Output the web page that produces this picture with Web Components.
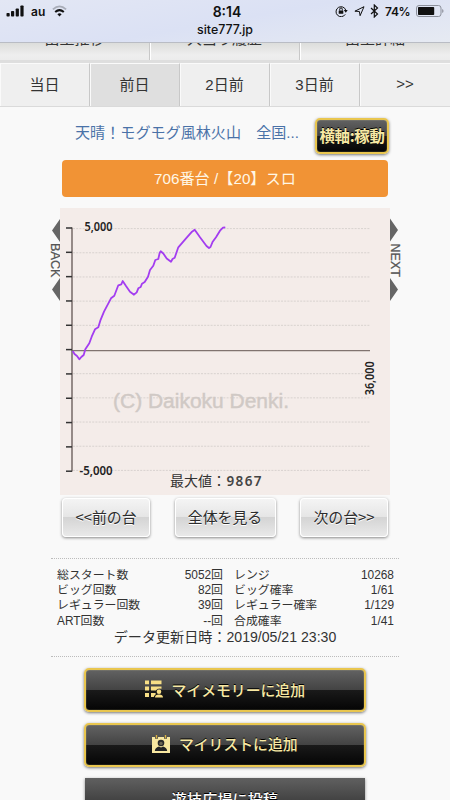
<!DOCTYPE html>
<html lang="ja">
<head>
<meta charset="utf-8">
<meta name="viewport" content="width=device-width">
<title>site777.jp</title>
<style>
html,body{margin:0;height:800px;overflow:hidden;background:#f9f9f9}
body{font-family:"Liberation Sans","Noto Sans CJK JP",sans-serif;color:#333}
</style>
</head>
<body>
<machine-page></machine-page>
<script>
function define(name, html) {
  const t = document.createElement('template');
  t.innerHTML = html;
  customElements.define(name, class extends HTMLElement {
    constructor() {
      super();
      this.attachShadow({mode: 'open'}).append(t.content.cloneNode(true));
    }
  });
}

define('status-bar', `<style>
:host{display:block;height:43px;box-sizing:border-box;background:linear-gradient(170deg,#e3e7f4,#dbe1f4 50%,#e6eaf2);border-bottom:1px solid #b9bcc4;color:#111;font-family:Inter,"Liberation Sans",sans-serif}
.row{display:grid;grid-template-columns:1fr 60px 1fr;height:22px;align-items:center}
.l,.r{display:flex;align-items:center}
.l{padding-left:6px;gap:7px;font-size:12px;font-weight:600}
.t{text-align:center;font-size:14px;font-weight:600;padding-left:4px}
.r{justify-content:flex-end;padding-right:6px;font-size:12px;font-weight:600}
.u{text-align:center;font-size:12.4px;line-height:15px;font-weight:500}
svg{display:block}
</style>
<div class="row">
<div class="l"><svg width="18" height="12" viewBox="0 0 18 12"><g fill="#111"><rect x="0.5" y="8" width="3.2" height="3.5" rx=".8"/><rect x="5" y="6" width="3.2" height="5.5" rx=".8"/><rect x="9.7" y="3.5" width="3.2" height="8" rx=".8"/><rect x="14.4" y=".5" width="3.2" height="11" rx=".8"/></g></svg><span>au</span>
<svg width="15" height="12" viewBox="0 0 15 12" fill="none" stroke-width="1.8"><path d="M.9 4.4Q7.500-1.700 14.100 4.400" stroke="#a9adb8"/><path d="M3.200 7Q7.500 3.200 11.800 7" stroke="#111" stroke-width="2"/><path d="M5.400 9.200Q7.500 7.500 9.600 9.200L7.500 11.400Z" fill="#111"/></svg></div>
<div class="t">8:14</div>
<div class="r"><svg width="13" height="12" viewBox="0 0 13 12" fill="none" stroke="#111"><path d="M10.300 9.300A5 5 0 1 1 10.800 5.200"/><path d="M8.800 5h3.900l-1.900 2.800Z" fill="#111" stroke="none"/><rect x="3.700" y="5.400" width="4.600" height="3.400" rx=".4" fill="#111" stroke="none"/><path d="M4.700 5.500V4.200a1.300 1.300 0 0 1 2.600 0v1.300"/></svg>
<svg style="margin-left:6px" width="11" height="12" viewBox="0 0 11 12"><path d="M.9 6.200L10 1.700 6.100 10.700 5.400 6.500Z" fill="none" stroke="#111" stroke-linejoin="round"/></svg>
<svg style="margin-left:5px" width="9" height="14" viewBox="0 0 9 14"><path d="M1 4l6.500 6L4.300 13V1l3.200 3L1 10" fill="none" stroke="#111" stroke-width="1.200"/></svg>
<span style="margin:0 4px 0 6px;width:27px;letter-spacing:-.3px">74%</span>
<svg width="28" height="12" viewBox="0 0 28 12"><rect x=".5" y=".5" width="24.500" height="11" rx="2.500" fill="none" stroke="#8c909b"/><rect x="2" y="2" width="16.200" height="8" rx=".8" fill="#111"/><path d="M26.200 4v4q1.300-.6 1.300-2t-1.300-2" fill="#8c909b"/></svg></div>
</div>
<div class="u">site777.jp</div>`);

define('upper-tabs', `<style>
:host{display:grid;grid-template-columns:150px 150px 150px;height:17px;overflow:hidden;background:linear-gradient(#dcdddb,#eee 12px,#ececec);border-bottom:3px solid #dedede}
::slotted(span){display:block;height:15px;line-height:15px;margin-top:-12px;padding-bottom:15px;text-align:center;font-size:15px;box-sizing:content-box;border-right:1px solid #c8c8c8;box-shadow:1px 0 #fff}
</style><slot></slot>`);

define('day-tabs', `<style>
:host{display:grid;grid-template-columns:repeat(5,1fr);height:43px;background:#efefef;border-bottom:1px solid #dadada}
</style><slot></slot>`);
define('day-tab', `<style>
:host{display:flex;align-items:center;justify-content:center;font-size:15px;border-right:1px solid #c8c8c8;border-left:1px solid #fafafa;border-top:1px solid #fafafa;color:#333;padding:0 1px 3px 0}
:host([selected]){background:#dfdfdf}
:host(:last-child){border-right:0}
</style><slot></slot>`);

define('gold-button', `<style>
:host{display:flex;box-sizing:border-box;border:2px solid #e9c64f;border-radius:5px;background:linear-gradient(#626262,#434343 50%,#1a1a1a 50%,#050505);box-shadow:0 1px 3px #777,inset 0 0 1px #fff3b0;color:#f8e9a4;align-items:center;justify-content:center;white-space:nowrap;text-shadow:0 -1px #000;font-weight:500;font-family:"Noto Sans CJK JP",sans-serif;padding-bottom:2px}
</style><slot></slot>`);

define('gray-button', `<style>
:host{display:flex;box-sizing:border-box;height:39px;align-items:center;justify-content:center;border:1px solid #fff;border-radius:4px;background:linear-gradient(#f4f4f4,#e5e5e5 50%,#d4d4d4 50%,#e9e9e9);box-shadow:0 1px 3px #888;font-size:14.900px;color:#2c2c2c;text-shadow:0 1px #fff;white-space:nowrap;font-family:"Noto Sans CJK JP",sans-serif;padding-bottom:3px}
</style><slot></slot>`);

define('payout-chart', `<style>
:host{display:block;width:330px;height:287px;background:#f4ece9}
svg{display:block}
text{font-family:"Noto Sans","Noto Sans CJK JP",sans-serif}
.mark{font-family:"Liberation Sans",sans-serif}
</style>
<svg width="330" height="287" viewBox="60 208 330 287">
<g id="grid" stroke="#d8d2cf" stroke-dasharray="2 1.2"></g>
<text class="mark" x="113" y="407.500" font-size="20" textLength="176" lengthAdjust="spacingAndGlyphs" fill="#d0c9c5" stroke="#d0c9c5" stroke-width=".4">(C) Daikoku Denki.</text>
<path d="M72 350.600H370" stroke="#80736f" stroke-width="1.400"/>
<path d="M72 227.500V471.500" stroke="#6c605d" stroke-width="1.400"/>
<g id="ticks" stroke="#333" stroke-width="1.500"></g>
<path fill="none" stroke="#a33df0" stroke-width="1.800" stroke-linejoin="round" d="M72.7 351L74.5 354 77 356 79.3 359.3 81.3 357 83.7 355 85.3 349.3 89.3 343.3 91.7 336.7 95 329.3 98.3 327.3 100.3 320.7 104 311.7 111 298.3 114.3 295.7 118.3 285.3 121.3 284.3 122.7 281 126 286 130 291.7 134 294.7 136.7 292.3 138.3 288.3 140.7 287 142 283.7 144.7 282 148 276.7 150 270 153.3 265.7 155.3 260 158.3 259 159.7 252.7 160.7 251.3 163.3 253.5 166.7 258.5 171 261.7 172.5 259 174.7 257.7 178.3 247.3 186.7 237.7 192 231.7 194.7 229.7 200 237.3 206.5 246 209 248 210.5 247 212.7 241.7 216 237.3 220 230.7 223 227.7 225.3 227.3"/>
<g fill="#222" font-weight="600" font-size="12">
<text x="84.500" y="231" textLength="28" lengthAdjust="spacingAndGlyphs">5,000</text>
<text x="79.500" y="474.700" textLength="33" lengthAdjust="spacingAndGlyphs">-5,000</text>
<text transform="translate(373.8 395.3) rotate(-90)" textLength="34" lengthAdjust="spacingAndGlyphs">36,000</text>
</g>
<text x="170" y="486" font-size="13.500" fill="#333" textLength="56" lengthAdjust="spacingAndGlyphs">最大値：</text>
<text x="226.500" y="486" font-size="13.500" font-weight="600" fill="#444" textLength="35" lengthAdjust="spacing">9867</text>
</svg>`);

define('stat-row', `<style>
:host{display:flex;justify-content:space-between;height:15.200px;line-height:15.200px;font-size:11.900px;white-space:nowrap}
</style><slot name="label"></slot><slot name="value"></slot>`);

define('machine-page', `<style>
:host{display:block;width:450px;height:800px;overflow:hidden;background:#f9f9f9;color:#333}
.title{display:flex;align-items:flex-start;margin:11px 61px 0 75px;height:42px;justify-content:space-between}
.title a{color:#4a72a8;font-size:15.100px;line-height:23px;padding-top:3px;white-space:nowrap}
.title gold-button{width:74px;height:36px;font-size:15.400px;font-weight:700;letter-spacing:-.3px}
.bar{margin:0 62px;height:37px;box-sizing:border-box;padding-bottom:4px;border-radius:4px;background:#f19335;color:#fff7e6;display:flex;align-items:center;justify-content:center;font-size:15.200px;white-space:nowrap}
.chart{display:flex;justify-content:center;margin-top:11px}
.side{width:9px;height:84px;margin-top:10px;display:block;overflow:visible}
.side text{font:12px "Liberation Sans",sans-serif;fill:#555;stroke:#555;stroke-width:.25}
.nav{display:flex;margin:3px 62px 0;justify-content:space-between}
.stats{margin:21px 51px 0;border-top:1.500px dotted #bcbcbc;border-bottom:1.500px dotted #bcbcbc;height:99px;box-sizing:border-box;padding:9px 6px 0}
.cols{display:grid;grid-template-columns:166px 160px;gap:11px}
.upd{text-align:center;font-size:14.100px;line-height:20px;margin-top:-2px;white-space:nowrap}
.acts{display:flex;flex-direction:column;gap:10.500px;margin:11px 84px 0}
.acts gold-button{height:44px;font-size:14.850px}
.acts svg{display:block;margin-right:8.500px}
.post{height:44px;box-sizing:border-box;padding-bottom:3px;flex:none;margin:1px 1px 0;background:linear-gradient(#606060,#434343 50%,#111 50%);color:#fff;box-shadow:0 1px 3px #888;display:flex;justify-content:center;align-items:center;font:500 15px "Noto Sans CJK JP",sans-serif;letter-spacing:.2px;text-shadow:0 -1px #000}
</style>
<status-bar></status-bar>
<upper-tabs><span>出玉推移</span><span>大当り履歴</span><span style="border:0;box-shadow:none">出玉詳細</span></upper-tabs>
<day-tabs><day-tab>当日</day-tab><day-tab selected>前日</day-tab><day-tab>2日前</day-tab><day-tab>3日前</day-tab><day-tab>&gt;&gt;</day-tab></day-tabs>
<div class="title"><a>天晴！モグモグ風林火山　全国...</a><gold-button>横軸:稼動</gold-button></div>
<div class="bar">706番台 /【20】スロ</div>
<div class="chart">
<svg class="side" width="9" height="84" viewBox="51 218 9 84"><path d="M60 219v23l-8-11.500ZM60 278v23l-8-11.500Z" fill="#666"/><text transform="translate(51.300 243) rotate(90)" textLength="34.500" lengthAdjust="spacingAndGlyphs">BACK</text></svg>
<payout-chart></payout-chart>
<svg class="side" width="9" height="84" viewBox="390 218 9 84"><path d="M390 218.500v23l8-11.500ZM390 278v23l8-11.500Z" fill="#666"/><text transform="translate(390.600 243.500) rotate(90)" textLength="33.500" lengthAdjust="spacingAndGlyphs">NEXT</text></svg>
</div>
<div class="nav"><gray-button style="width:88px">&lt;&lt;前の台</gray-button><gray-button style="width:101px">全体を見る</gray-button><gray-button style="width:88px">次の台&gt;&gt;</gray-button></div>
<div class="stats"><div class="cols"><div id="a"></div><div id="b"></div></div><div class="upd">データ更新日時：2019/05/21 23:30</div></div>
<div class="acts">
<gold-button><svg width="18" height="18" viewBox="0 0 18 18" fill="#f8df86"><path d="M0 .5h4v3.700H0zM6 .5h10.500v3.700H6zM0 6.500h4v4H0zM6 6.500h10.500v2.200q-4.500-1-5.500 1.800H6zM0 13h4v4H0zM6 13h4.500q.5 1 0 1.500Q9 15.500 8.800 17H6z"/><circle cx="14" cy="11.700" r="2.300"/><path d="M10 17.500q0-3 4-3t4 3z"/></svg>マイメモリーに追加</gold-button>
<gold-button><svg width="18" height="18" viewBox="0 0 18 18"><path d="M0 2h3v1.800h3V2h6v1.800h3V2h3v16H0z" fill="#f8e7a0"/><path d="M3.800 0h1.400v3.200H3.800zM12.800 0h1.400v3.200h-1.400z" fill="#d7af42"/><circle cx="9" cy="8" r="3.300" fill="#292929"/><circle cx="9" cy="8.400" r="1.700" fill="#6a6552"/><path d="M2.800 16q.2-3.500 4.200-4.500l2 1 2-1q4 1 4.200 4.500z" fill="#222"/></svg>マイリストに追加</gold-button>
<div class="post">遊技広場に投稿</div>
</div>`);

const root = document.querySelector('machine-page').shadowRoot;
function fill(id, rows) {
  for (const [l, v] of rows) {
    const r = document.createElement('stat-row');
    r.innerHTML = '<span slot="label"></span><span slot="value"></span>';
    r.firstChild.textContent = l;
    r.lastChild.textContent = v;
    root.getElementById(id).append(r);
  }
}
fill('a', [['総スタート数','5052回'],['ビッグ回数','82回'],['レギュラー回数','39回'],['ART回数','--回']]);
fill('b', [['レンジ','10268'],['ビッグ確率','1/61'],['レギュラー確率','1/129'],['合成確率','1/41']]);

const chart = root.querySelector('payout-chart').shadowRoot;
const NS = 'http://www.w3.org/2000/svg';
function line(g, d) {
  const p = document.createElementNS(NS, 'path');
  p.setAttribute('d', d);
  chart.getElementById(g).append(p);
}
for (let i = 0; i < 11; i++) {
  if (i !== 5) line('grid', `M73 ${228.6 + i * 24.18}H370`);
  line('ticks', `M66 ${228 + i * 24.32}H72`);
}
</script>
</body>
</html>
